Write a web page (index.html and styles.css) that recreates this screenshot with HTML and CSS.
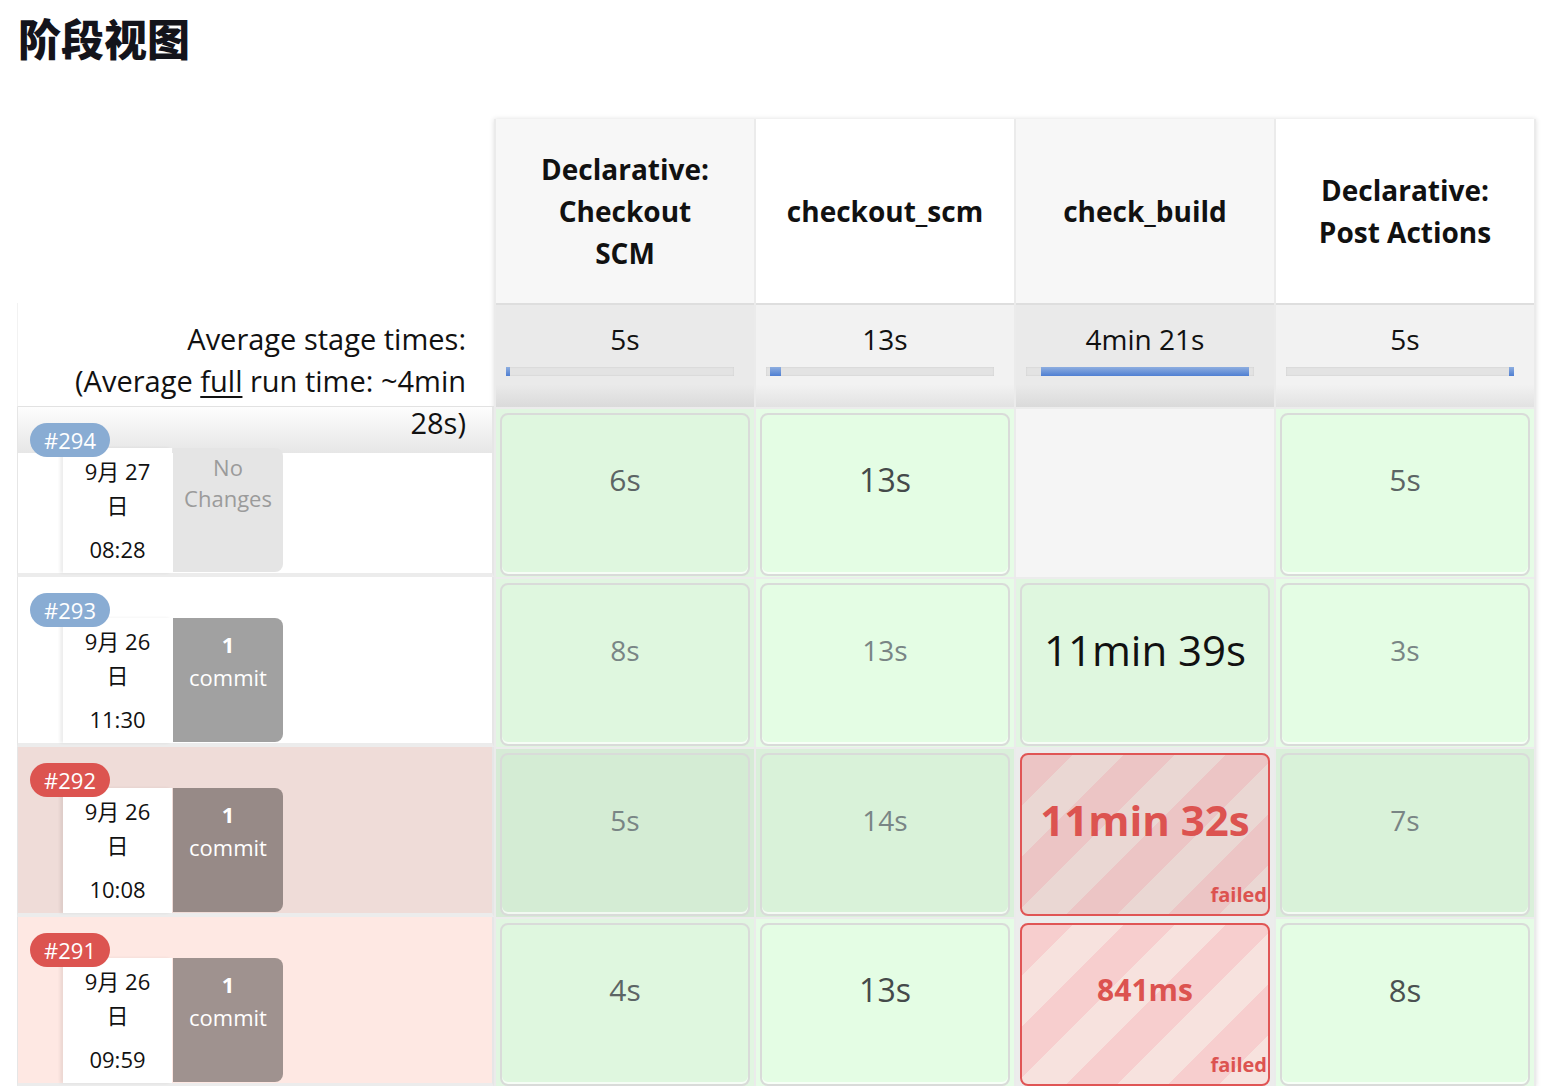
FILE: index.html
```html
<!DOCTYPE html>
<html lang="zh">
<head>
<meta charset="utf-8">
<title>阶段视图</title>
<link rel="stylesheet" href="styles.css">
</head>
<body>
<h1 class="title">阶段视图</h1>
<div class="stage-view">
  <div class="jobs">
    <div class="jobs-head"></div>
    <div class="avg-label">
      <div class="avg-label__text">Average stage times:<br>(Average <a href="#">full</a> run time: ~4min 28s)</div>
    </div>
    <div class="build build--first">
      <span class="badge badge--ok">#294</span>
      <div class="date"><div>9月 27日</div><div class="date__time">08:28</div></div>
      <div class="changes changes--none">No Changes</div>
    </div>
    <div class="build">
      <span class="badge badge--ok">#293</span>
      <div class="date"><div>9月 26日</div><div class="date__time">11:30</div></div>
      <div class="changes changes--commit changes--gray"><div class="changes__count">1</div>commit</div>
    </div>
    <div class="build build--fail-dark">
      <span class="badge badge--fail">#292</span>
      <div class="date"><div>9月 26日</div><div class="date__time">10:08</div></div>
      <div class="changes changes--commit changes--mauve"><div class="changes__count">1</div>commit</div>
    </div>
    <div class="build build--fail-light">
      <span class="badge badge--fail">#291</span>
      <div class="date"><div>9月 26日</div><div class="date__time">09:59</div></div>
      <div class="changes changes--commit changes--mauve-light"><div class="changes__count">1</div>commit</div>
    </div>
  </div>

  <div class="stages">
    <div class="stage-head stage-head--alt">Declarative: Checkout SCM</div>
    <div class="stage-head">checkout_scm</div>
    <div class="stage-head stage-head--alt">check_build</div>
    <div class="stage-head">Declarative: Post Actions</div>

    <div class="stage-avg stage-avg--alt">5s<div class="track"><div class="track__fill" style="left:0;width:4px"></div></div></div>
    <div class="stage-avg">13s<div class="track"><div class="track__fill" style="left:4px;width:11px"></div></div></div>
    <div class="stage-avg stage-avg--alt">4min 21s<div class="track"><div class="track__fill" style="left:15px;width:208px"></div></div></div>
    <div class="stage-avg">5s<div class="track"><div class="track__fill" style="left:223px;width:5px"></div></div></div>

    <!-- #294 -->
    <div class="cell cell--alt"><div class="box box--ok-alt"><span class="dur dur--md">6s</span></div></div>
    <div class="cell"><div class="box box--ok"><span class="dur dur--lg">13s</span></div></div>
    <div class="cell cell--empty"></div>
    <div class="cell"><div class="box box--ok"><span class="dur dur--md">5s</span></div></div>

    <!-- #293 -->
    <div class="cell cell--alt"><div class="box box--ok-alt"><span class="dur dur--sm">8s</span></div></div>
    <div class="cell"><div class="box box--ok"><span class="dur dur--sm">13s</span></div></div>
    <div class="cell cell--alt"><div class="box box--ok-alt"><span class="dur dur--xl">11min 39s</span></div></div>
    <div class="cell"><div class="box box--ok"><span class="dur dur--sm">3s</span></div></div>

    <!-- #292 -->
    <div class="cell cell--tint-alt"><div class="box box--tint-alt"><span class="dur dur--sm">5s</span></div></div>
    <div class="cell cell--tint"><div class="box box--tint"><span class="dur dur--sm">14s</span></div></div>
    <div class="cell cell--fail"><div class="box box--fail box--fail-dark"><span class="dur dur--fail-xl">11min 32s</span><span class="failed">failed</span></div></div>
    <div class="cell cell--tint"><div class="box box--tint"><span class="dur dur--sm">7s</span></div></div>

    <!-- #291 -->
    <div class="cell cell--alt"><div class="box box--ok-alt"><span class="dur dur--md">4s</span></div></div>
    <div class="cell"><div class="box box--ok"><span class="dur dur--lg">13s</span></div></div>
    <div class="cell cell--fail"><div class="box box--fail box--fail-light"><span class="dur dur--fail">841ms</span><span class="failed">failed</span></div></div>
    <div class="cell"><div class="box box--ok"><span class="dur dur--md-dark">8s</span></div></div>
  </div>
</div>
</body>
</html>
```

FILE: styles.css
```css
* { box-sizing: border-box; }

body {
  margin: 0;
  background: #fff;
  color: #111;
  font-family: "Open Sans", "Noto Sans CJK SC", sans-serif;
}

.title {
  margin: 13px 0 0 18px;
  font: 900 43px/48px "Noto Sans CJK SC", "Noto Sans", sans-serif;
  color: #14141b;
}

.stage-view {
  display: flex;
  align-items: flex-start;
  margin: 58px 0 0 17px;
}

/* ---------- left column ---------- */
.jobs {
  flex: none;
  width: 477px;
}

.jobs-head { height: 184px; }

.avg-label {
  position: relative;
  z-index: 2;
  height: 104px;
  padding: 15px 28px 0 0;
  font-size: 29px;
  line-height: 42px;
  text-align: right;
  color: #111;
  border-left: 1px solid #f2f2f2;
  border-bottom: 1px solid #e2e2e2;
}

.avg-label__text {
  width: 412px;
  margin-left: auto;
}

.avg-label a {
  color: inherit;
  text-decoration: underline;
  text-underline-offset: 4px;
  text-decoration-thickness: 2px;
}

.build {
  position: relative;
  display: flex;
  height: 170px;
  padding: 41px 0 0 45px;
  background: #fff;
  border-left: 1px solid #e6e6e6;
  border-right: 2px solid #e6e6e6;
  border-bottom: 4px solid #ececec;
}

.build--first {
  background: linear-gradient(#fdfdfd, #e6e6e6) top / 100% 46px no-repeat, #fff;
}

.build--fail-dark { background: #efdcd8; }
.build--fail-light { background: #fee8e3; }

.badge {
  position: absolute;
  z-index: 1;
  left: 12px;
  top: 16px;
  width: 80px;
  height: 34px;
  border-radius: 17px;
  color: #fff;
  font-size: 22px;
  line-height: 34px;
  text-align: center;
}

.badge--ok { background: #89acd3; }
.badge--fail { background: #dc5450; }

.date {
  width: 109px;
  height: 125px;
  padding: 6px 12px 0;
  background: #fff;
  box-shadow: -3px 0 3px rgba(0, 0, 0, 0.07);
  font-size: 22px;
  line-height: 34px;
  text-align: center;
  color: #111;
}

.date__time { margin-top: 10px; }

.changes {
  width: 110px;
  height: 124px;
  margin-left: 1px;
  border-radius: 0 8px 8px 0;
  font-size: 22px;
  text-align: center;
  color: #fff;
}

.changes--none {
  padding-top: 4px;
  line-height: 31px;
  background: #e5e5e5;
  color: #9b9b9b;
}

.changes--commit {
  padding-top: 10px;
  line-height: 33px;
}

.changes--gray { background: #a1a1a1; }
.changes--mauve { background: #978a87; }
.changes--mauve-light { background: #9f928f; }

.changes__count { font-weight: 700; }

/* ---------- stage table ---------- */
.stages {
  flex: none;
  display: grid;
  grid-template-columns: repeat(4, 258px);
  column-gap: 2px;
  padding: 0 2px;
  background: #ebebeb;
  box-shadow: 0 0 5px rgba(0, 0, 0, 0.13);
}

.stage-head {
  display: flex;
  align-items: center;
  justify-content: center;
  height: 184px;
  padding: 0 34px;
  background: #fff;
  font-size: 28px;
  font-weight: 700;
  line-height: 42px;
  text-align: center;
  color: #111;
}

.stage-head--alt { background: #f7f7f7; }

.stage-avg {
  height: 104px;
  padding-top: 13px;
  border-top: 2px solid #dedede;
  background: linear-gradient(#f2f2f2 78%, #e2e2e2);
  font-size: 28px;
  line-height: 42px;
  text-align: center;
  color: #111;
}

.stage-avg--alt { background: linear-gradient(#eaeaea 78%, #dadada); }

.track {
  position: relative;
  width: 228px;
  height: 9px;
  margin: 7px 0 0 10px;
  background: #e3e3e3;
  box-shadow: inset 0 0 2px rgba(0, 0, 0, 0.12);
}

.track__fill {
  position: absolute;
  top: 0;
  bottom: 0;
  background: linear-gradient(#8eaee0, #4f7fd2);
}

.cell {
  height: 170px;
  padding: 4px 4px 0;
  border-top: 2px solid #ececec;
  background: #e6fce6;
}

.cell--alt { background: #e1f6e1; }
.cell--tint { background: #daf0da; }
.cell--tint-alt { background: #d6ebd6; }
.cell--empty { background: #f5f5f5; }
.cell--fail { background: #ececec; }

.box {
  display: flex;
  flex-direction: column;
  align-items: center;
  height: 163px;
  border: 2px solid #d9dbd9;
  border-radius: 8px;
  box-shadow: inset 0 -2px 0 rgba(255, 255, 255, 0.7);
}

.box--ok { background: #e4fde4; }
.box--ok-alt { background: #dff7df; }
.box--tint { background: #d9f2d9; }
.box--tint-alt { background: #d4ecd4; }

.box--fail {
  border-color: #e05555;
  box-shadow: none;
}

.box--fail-dark {
  background: repeating-linear-gradient(135deg, #ecc5c5 0 36px, #ead7d3 36px 72px);
}

.box--fail-light {
  background: repeating-linear-gradient(135deg, #f7cece 0 36px, #f7e2de 36px 72px);
}

.dur {
  margin-top: 40px;
  line-height: 50px;
}

.dur--sm { font-size: 28px; color: #798585; }
.dur--md { font-size: 30px; color: #5c6565; }
.dur--md-dark { font-size: 31px; color: #4a5050; }
.dur--lg { font-size: 32px; color: #444a4a; }
.dur--xl { font-size: 42px; color: #111; }

.dur--fail-xl {
  font-size: 42px;
  font-weight: 700;
  color: #dc5350;
}

.dur--fail {
  font-size: 30px;
  font-weight: 700;
  color: #dc5350;
}

.failed {
  align-self: flex-end;
  margin: auto 1px 7px 0;
  font-size: 20px;
  font-weight: 700;
  line-height: 24px;
  color: #dc5350;
}
```
